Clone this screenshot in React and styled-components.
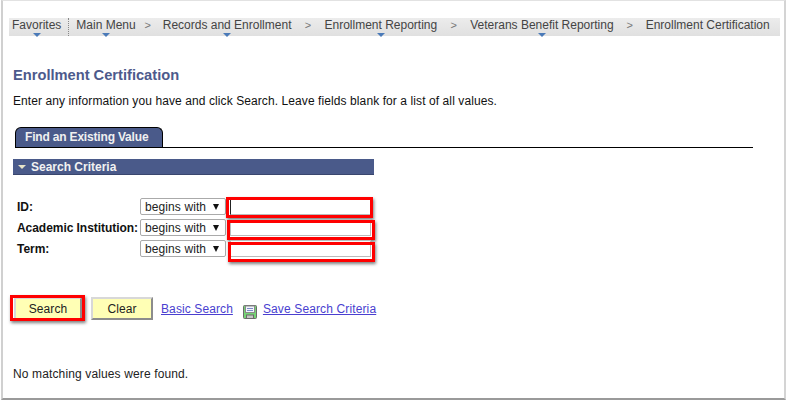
import React from "react";
import styled, { createGlobalStyle } from "styled-components";

const GlobalStyle = createGlobalStyle`
  html, body {
    margin: 0;
    padding: 0;
    background: #fff;
    font-family: "Liberation Sans", Arial, sans-serif;
  }
`;

const Frame = styled.div`
  box-sizing: border-box;
  width: 785px;
  height: 400px;
  margin-left: 1px;
  padding: 17px 4px 0 6px;
  background: #fff;
  border-top: 1px solid #e2e2e2;
  border-left: 2px solid #d0d0d0;
  border-right: 2px solid #d4d4d4;
  border-bottom: 2px solid #9a9a9a;
`;

const Breadcrumb = styled.nav`
  display: flex;
  align-items: flex-start;
  height: 18px;
  padding-left: 3px;
  background: linear-gradient(#ececec, #e0e0e0);
  font-size: 12px;
  color: #444;
  white-space: nowrap;
`;

const Crumb = styled.span`
  position: relative;
  height: 18px;
  line-height: 14px;
  ${(p) =>
    p.$menu &&
    `&::after {
      content: "";
      position: absolute;
      left: 50%;
      bottom: -1px;
      margin-left: -4px;
      border-left: 4px solid transparent;
      border-right: 4px solid transparent;
      border-top: 4px solid #4a7ab8;
    }`}
`;

const Divider = styled.span`
  height: 18px;
  margin: 0 7px;
  border-left: 1px dotted #888;
`;

const Chevron = styled.span`
  box-sizing: border-box;
  width: ${(p) => p.$width}px;
  padding-right: ${(p) => p.$pad || 0}px;
  text-align: center;
  font-size: 11px;
  line-height: 14px;
  color: #777;
`;

const Title = styled.h1`
  margin: 31px 0 0 4px;
  font-size: 14.67px;
  line-height: 16px;
  font-weight: bold;
  color: #4d5a8c;
`;

const Intro = styled.p`
  margin: 11px 0 0 4px;
  font-size: 12px;
  line-height: 14px;
  letter-spacing: 0.09px;
  color: #111;
`;

const TabStrip = styled.div`
  display: flex;
  width: 738px;
  height: 20px;
  margin: 19px 0 0 6px;
  border-bottom: 1px solid #000;
`;

const Tab = styled.div`
  box-sizing: border-box;
  width: 148px;
  height: 20px;
  padding-left: 9px;
  background: #4a5a8a;
  border: 1px solid #000;
  border-bottom: none;
  border-radius: 6px 6px 0 0;
  font-size: 12px;
  line-height: 19px;
  font-weight: bold;
  letter-spacing: -0.18px;
  color: #f0f0f0;
`;

const SectionBar = styled.div`
  display: flex;
  align-items: center;
  box-sizing: border-box;
  width: 361px;
  height: 16px;
  margin: 11px 0 0 4px;
  padding-left: 5px;
  background: #4a5a8a;
  border-bottom: 1px solid #39466e;
  font-size: 12px;
  font-weight: bold;
  color: #f2f2f2;
`;

const Caret = styled.span`
  width: 0;
  height: 0;
  margin-right: 5px;
  border-left: 4px solid transparent;
  border-right: 4px solid transparent;
  border-top: 4px solid #e8e4c8;
`;

const Form = styled.div`
  display: grid;
  grid-template-columns: 123px 87px 147px;
  grid-auto-rows: 17px;
  row-gap: 4px;
  align-items: center;
  margin: 23px 0 0 8px;
`;

const Label = styled.label`
  font-size: 12px;
  font-weight: bold;
  letter-spacing: -0.05px;
  color: #111;
  white-space: nowrap;
`;

const Select = styled.div`
  display: flex;
  align-items: center;
  justify-content: space-between;
  box-sizing: border-box;
  width: 86px;
  height: 17px;
  padding: 0 6px 0 4px;
  background: #fff;
  border: 1px solid #aaa;
  border-radius: 2px;
  font-size: 12px;
  letter-spacing: 0.1px;
  color: #222;
  &::after {
    content: "";
    border-left: 3.5px solid transparent;
    border-right: 3.5px solid transparent;
    border-top: 6px solid #111;
  }
`;

const InputCell = styled.div`
  position: relative;
  height: 17px;
`;

const Input = styled.input`
  box-sizing: border-box;
  display: block;
  width: 141px;
  height: 17px;
  margin-left: 3px;
  padding: 0;
  background: #fff;
  border: 1px solid #bbb;
  border-left-color: ${(p) => (p.$focused ? "#222" : "#bbb")};
  border-right-color: ${(p) => (p.$focused ? "#7a9fd0" : "#bbb")};
  outline: none;
`;

const RedBox = styled.span`
  position: absolute;
  box-sizing: border-box;
  left: ${(p) => p.$left}px;
  top: ${(p) => p.$top}px;
  width: ${(p) => p.$width}px;
  height: ${(p) => p.$height}px;
  border: 3px solid #f00;
  box-shadow: 1px 2px 3px rgba(0, 0, 0, 0.5);
  pointer-events: none;
`;

const Actions = styled.div`
  display: flex;
  align-items: center;
  height: 23px;
  margin: 40px 0 0 5px;
  font-size: 12px;
`;

const ButtonWrap = styled.div`
  position: relative;
  margin-right: ${(p) => p.$gap}px;
`;

const Button = styled.button`
  box-sizing: border-box;
  display: block;
  width: ${(p) => p.$width}px;
  height: 23px;
  padding: 0;
  background: #ffffb5;
  border: 2px solid;
  border-color: #d8d8d8 #8c8c8c #8c8c8c #d8d8d8;
  font-family: inherit;
  font-size: 12px;
  letter-spacing: 0.1px;
  color: #222;
`;

const PageLink = styled.a`
  padding-top: 1px;
  letter-spacing: ${(p) => p.$spacing}px;
  color: #4a3fd0;
  text-decoration: underline;
`;

const SaveIcon = styled.svg`
  display: block;
  margin: 7px 6px 0 10px;
`;

const Message = styled.p`
  margin: 47px 0 0 4px;
  font-size: 12px;
  line-height: 14px;
  letter-spacing: 0.13px;
  color: #222;
`;

function FloppyIcon() {
  return (
    <SaveIcon width="14" height="14" viewBox="0 0 14 14">
      <rect x="0.5" y="0.5" width="13" height="13" rx="1" fill="#74d474" stroke="#6a6a6a" />
      <rect x="2.5" y="1" width="9" height="6.5" fill="#f2f5fc" stroke="#8a8a8a" />
      <path d="M4 3.5h6M4 5.5h6" stroke="#7d8ac8" />
      <rect x="3.5" y="10" width="7" height="3.5" fill="#c4c4c4" stroke="#6a6a6a" />
    </SaveIcon>
  );
}

const rows = [
  { label: "ID:", focused: true, box: { left: -1, top: -1, width: 147, height: 21 } },
  { label: "Academic Institution:", box: { left: 0, top: 1, width: 148, height: 20 } },
  { label: "Term:", box: { left: 1, top: 2, width: 147, height: 20 } },
];

export default function App() {
  return (
    <>
      <GlobalStyle />
      <Frame>
        <Breadcrumb>
          <Crumb $menu>Favorites</Crumb>
          <Divider />
          <Crumb $menu>Main Menu</Crumb>
          <Chevron $width={27} $pad={3}>&gt;</Chevron>
          <Crumb $menu>Records and Enrollment</Crumb>
          <Chevron $width={33}>&gt;</Chevron>
          <Crumb $menu>Enrollment Reporting</Crumb>
          <Chevron $width={33}>&gt;</Chevron>
          <Crumb $menu>Veterans Benefit Reporting</Crumb>
          <Chevron $width={32}>&gt;</Chevron>
          <Crumb>Enrollment Certification</Crumb>
        </Breadcrumb>

        <Title>Enrollment Certification</Title>
        <Intro>Enter any information you have and click Search. Leave fields blank for a list of all values.</Intro>

        <TabStrip>
          <Tab>Find an Existing Value</Tab>
        </TabStrip>

        <SectionBar>
          <Caret />
          Search Criteria
        </SectionBar>

        <Form>
          {rows.map((row) => (
            <React.Fragment key={row.label}>
              <Label>{row.label}</Label>
              <Select>begins with</Select>
              <InputCell>
                <Input $focused={row.focused} />
                <RedBox $left={row.box.left} $top={row.box.top} $width={row.box.width} $height={row.box.height} />
              </InputCell>
            </React.Fragment>
          ))}
        </Form>

        <Actions>
          <ButtonWrap $gap={9}>
            <Button $width={68}>Search</Button>
            <RedBox $left={-4} $top={-2} $width={75} $height={26} />
          </ButtonWrap>
          <ButtonWrap $gap={8}>
            <Button $width={62}>Clear</Button>
          </ButtonWrap>
          <PageLink href="#" $spacing={0.1}>Basic Search</PageLink>
          <FloppyIcon />
          <PageLink href="#" $spacing={0.13}>Save Search Criteria</PageLink>
        </Actions>

        <Message>No matching values were found.</Message>
      </Frame>
    </>
  );
}
